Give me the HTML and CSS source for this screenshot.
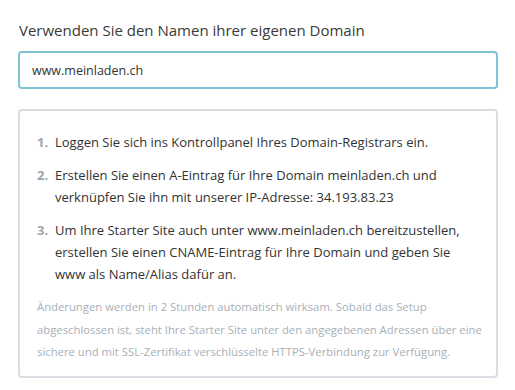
FILE: index.html
```html
<!DOCTYPE html>
<html lang="de">
  <head>
    <meta charset="UTF-8" />
    <meta name="viewport" content="width=device-width, initial-scale=1.0" />
    <link rel="stylesheet" href="styles.css">
    <title>Domain</title>
  </head>
  <body>
    <div class="container">
      <p class="title">Verwenden Sie den Namen ihrer eigenen Domain</p>
      <div class="input">www.meinladen.ch</div>
      <div class="box">
        <ol class="steps">
          <li>Loggen Sie sich ins Kontrollpanel Ihres Domain-Registrars ein.</li>
          <li>Erstellen Sie einen A-Eintrag für Ihre Domain meinladen.ch und verknüpfen Sie ihn mit unserer IP-Adresse: 34.193.83.23</li>
          <li>Um Ihre Starter Site auch unter www.meinladen.ch bereitzustellen, erstellen Sie einen CNAME-Eintrag für Ihre Domain und geben Sie www als Name/Alias dafür an.</li>
        </ol>
        <p class="note">Änderungen werden in 2 Stunden automatisch wirksam. Sobald das Setup abgeschlossen ist, steht Ihre Starter Site unter den angegebenen Adressen über eine sichere und mit SSL-Zertifikat verschlüsselte HTTPS-Verbindung zur Verfügung.</p>
      </div>
    </div>
  </body>
</html>
```

FILE: styles.css
```css
body {
  background-color: #ffffff;
  font-family: "Open Sans", sans-serif;
  color: #333333;
  margin: 0px;
  padding: 0px;
}

.container {
  padding: 20px 18px 0px 18px;
  width: 480px;
}

.title {
  margin: 0px 0px 11px 1px;
  font-size: 15px;
  line-height: 20px;
  color: #3a3a3a;
}

.input {
  height: 34px;
  border: 2px solid #7fc3d6;
  border-radius: 4px;
  padding: 0px 12px;
  font-size: 12.5px;
  line-height: 35px;
  color: #333333;
}

.box {
  margin-top: 20px;
  border: 2px solid #d8dee3;
  border-radius: 4px;
  padding: 20px 8px 12px 17px;
}

.steps {
  margin: 0px;
  padding: 0px 22px 0px 0px;
  list-style: none;
  counter-reset: step;
  font-size: 13px;
  line-height: 22px;
  color: #333333;
}

.steps li {
  display: flex;
  margin-bottom: 11px;
  counter-increment: step;
}

.steps li::before {
  content: counter(step) ".";
  flex: 0 0 18px;
  color: #9aa5ae;
  font-weight: bold;
}

.note {
  margin: 3px 0px 0px 0px;
  font-size: 11.3px;
  line-height: 22.5px;
  color: #a8b0b7;
}
```
